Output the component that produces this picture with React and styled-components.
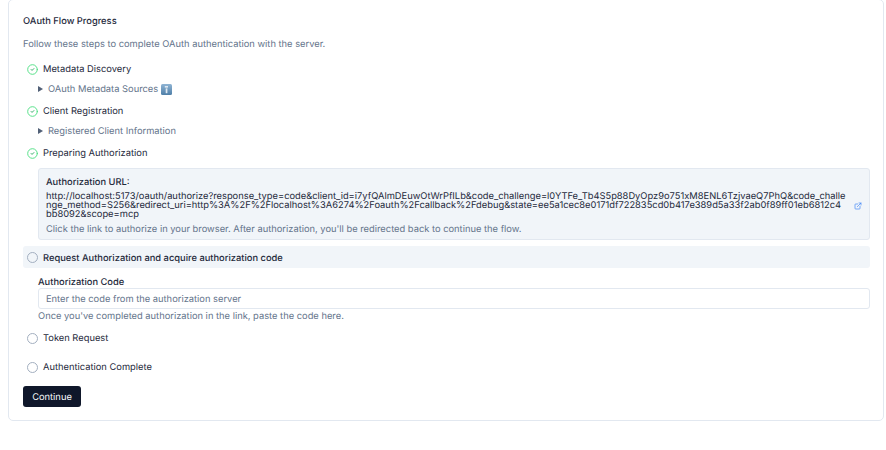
import React from 'react';
import styled, { createGlobalStyle } from 'styled-components';

const GlobalStyle = createGlobalStyle`
  html, body { margin: 0; padding: 0; background: #fff; }
  body {
    font-family: Inter, "Noto Sans", sans-serif;
    color: #0f172a;
    text-rendering: geometricPrecision;
  }
`;

const Card = styled.div`
  box-sizing: border-box;
  width: 876px;
  height: 422px;
  margin: -1px 0 0 8px;
  padding: 16px 13px 0 14px;
  border: 1px solid #e2e8f0;
  border-radius: 5px;
`;

const Title = styled.h3`
  margin: 0;
  font-size: 9.33px;
  line-height: 11px;
  font-weight: 450;
  color: #1e293b;
`;

const Description = styled.p`
  margin: 12px 0 0;
  font-size: 9.33px;
  line-height: 11px;
  color: #64748b;
`;

const Steps = styled.div`
  margin-top: 8px;
`;

const StepRow = styled.div`
  display: flex;
  align-items: center;
  gap: 5px;
  height: 22px;
  padding-left: 4px;
  margin-top: ${p => p.$top || 0}px;
  border-radius: 3px;
  background: ${p => (p.$active ? '#f1f5f9' : 'transparent')};
  font-size: 9.33px;
  color: #1e293b;
  font-weight: ${p => (p.$active ? 450 : 400)};
`;

const RowLabel = styled.span`
  padding-top: ${p => p.$drop || 0}px;
`;

const EmptyCircle = styled.span`
  box-sizing: border-box;
  width: 11px;
  height: 11px;
  border-radius: 50%;
  border: 1px solid #a3afc0;
`;

const Details = styled.div`
  box-sizing: border-box;
  display: flex;
  align-items: center;
  height: 20px;
  padding: 0 0 2px 15px;
  font-size: 9.33px;
  color: #64748b;
`;

const Caret = styled.span`
  width: 0;
  height: 0;
  margin-right: 5px;
  border-left: 5px solid #526077;
  border-top: 3px solid transparent;
  border-bottom: 3px solid transparent;
`;

const UrlBox = styled.div`
  box-sizing: border-box;
  margin: 4px 0 0 15px;
  height: 72px;
  padding: 8px 7px 0 7px;
  background: #f1f5f9;
  border: 1px solid #e2e8f0;
  border-radius: 3px;
`;

const UrlLabel = styled.div`
  font-size: 9.33px;
  line-height: 11px;
  font-weight: 450;
  color: #1e293b;
`;

const UrlRow = styled.div`
  display: flex;
  align-items: center;
  gap: 8px;
  margin-top: 4px;
`;

const UrlText = styled.span`
  flex: 1;
  min-width: 0;
  font-size: 9.33px;
  line-height: 9px;
  color: #1e293b;
  word-break: break-all;
`;

const Hint = styled.p`
  margin: ${p => p.$top || 0}px 0 0;
  font-size: 9.33px;
  line-height: 11px;
  color: #64748b;
`;

const CodeSection = styled.div`
  margin: 9px 0 0 15px;
`;

const CodeLabel = styled.label`
  display: block;
  font-size: 9.33px;
  line-height: 11px;
  font-weight: 450;
  color: #1e293b;
`;

const CodeInput = styled.input`
  display: block;
  box-sizing: border-box;
  width: 100%;
  height: 21px;
  padding: 2px 7px 0;
  border: 1px solid #e2e8f0;
  border-radius: 3px;
  font: 9.33px Inter, sans-serif;
  text-rendering: geometricPrecision;
  &::placeholder { color: #64748b; }
`;

const ContinueButton = styled.button`
  display: block;
  width: 58px;
  height: 21px;
  margin-top: 8px;
  padding: 2px 0 0;
  border: 0;
  border-radius: 3px;
  background: #0f172a;
  color: #f8fafc;
  font: 400 9.33px Inter, sans-serif;
  text-rendering: geometricPrecision;
`;

const CheckIcon = () => (
  <svg width="11" height="11" viewBox="0 0 24 24" fill="none" stroke="#4ade80" strokeWidth="2" strokeLinecap="round" strokeLinejoin="round">
    <circle cx="12" cy="12" r="10.5" />
    <path d="m9 12 2 2 4-4" stroke="#22a55a" />
  </svg>
);

const InfoIcon = () => (
  <svg width="11" height="11" viewBox="0 0 11 11" style={{ marginLeft: 3 }}>
    <defs>
      <linearGradient id="infoFill" x1="0" y1="0" x2="0" y2="1">
        <stop offset="0" stopColor="#8fb4d4" />
        <stop offset="1" stopColor="#4f7fa8" />
      </linearGradient>
    </defs>
    <rect width="11" height="11" rx="1.5" fill="url(#infoFill)" />
    <rect x="3.8" y="2" width="3.2" height="1.6" fill="#dfe9f2" />
    <rect x="4.7" y="4.4" width="1.7" height="4.8" fill="#dfe9f2" />
  </svg>
);

const LinkIcon = () => (
  <svg width="8" height="8" viewBox="0 0 24 24" fill="none" stroke="#3b82f6" strokeWidth="2" strokeLinecap="round" strokeLinejoin="round" style={{ flexShrink: 0 }}>
    <path d="M15 3h6v6" />
    <path d="M10 14 21 3" />
    <path d="M18 13v6a2 2 0 0 1-2 2H5a2 2 0 0 1-2-2V8a2 2 0 0 1 2-2h6" />
  </svg>
);

const authUrl = "http://localhost:5173/oauth/authorize?response_type=code&client_id=i7yfQAlmDEuwOtWrPfILb&code_challenge=l0YTFe_Tb4S5p88DyOpz9o751xM8ENL6TzjvaeQ7PhQ&code_challenge_method=S256&redirect_uri=http%3A%2F%2Flocalhost%3A6274%2Foauth%2Fcallback%2Fdebug&state=ee5a1cec8e0171df722835cd0b417e389d5a33f2ab0f89ff01eb6812c4bb8092&scope=mcp";

export default function App() {
  return (
    <>
      <GlobalStyle />
      <Card>
        <Title>OAuth Flow Progress</Title>
        <Description>Follow these steps to complete OAuth authentication with the server.</Description>
        <Steps>
          <StepRow><CheckIcon /><RowLabel>Metadata Discovery</RowLabel></StepRow>
          <Details><Caret /><RowLabel>OAuth Metadata Sources</RowLabel><InfoIcon /></Details>
          <StepRow><CheckIcon /><RowLabel>Client Registration</RowLabel></StepRow>
          <Details><Caret /><RowLabel>Registered Client Information</RowLabel></Details>
          <StepRow><CheckIcon /><RowLabel>Preparing Authorization</RowLabel></StepRow>
          <UrlBox>
            <UrlLabel>Authorization URL:</UrlLabel>
            <UrlRow>
              <UrlText>{authUrl}</UrlText>
              <LinkIcon />
            </UrlRow>
            <Hint $top={5}>Click the link to authorize in your browser. After authorization, you'll be redirected back to continue the flow.</Hint>
          </UrlBox>
          <StepRow $active $top={6}><EmptyCircle /><RowLabel $drop={2}>Request Authorization and acquire authorization code</RowLabel></StepRow>
          <CodeSection>
            <CodeLabel>Authorization Code</CodeLabel>
            <CodeInput placeholder="Enter the code from the authorization server" />
            <Hint $top={2}>Once you've completed authorization in the link, paste the code here.</Hint>
          </CodeSection>
          <StepRow $top={5}><EmptyCircle /><RowLabel>Token Request</RowLabel></StepRow>
          <StepRow $top={7}><EmptyCircle /><RowLabel>Authentication Complete</RowLabel></StepRow>
        </Steps>
        <ContinueButton>Continue</ContinueButton>
      </Card>
    </>
  );
}
